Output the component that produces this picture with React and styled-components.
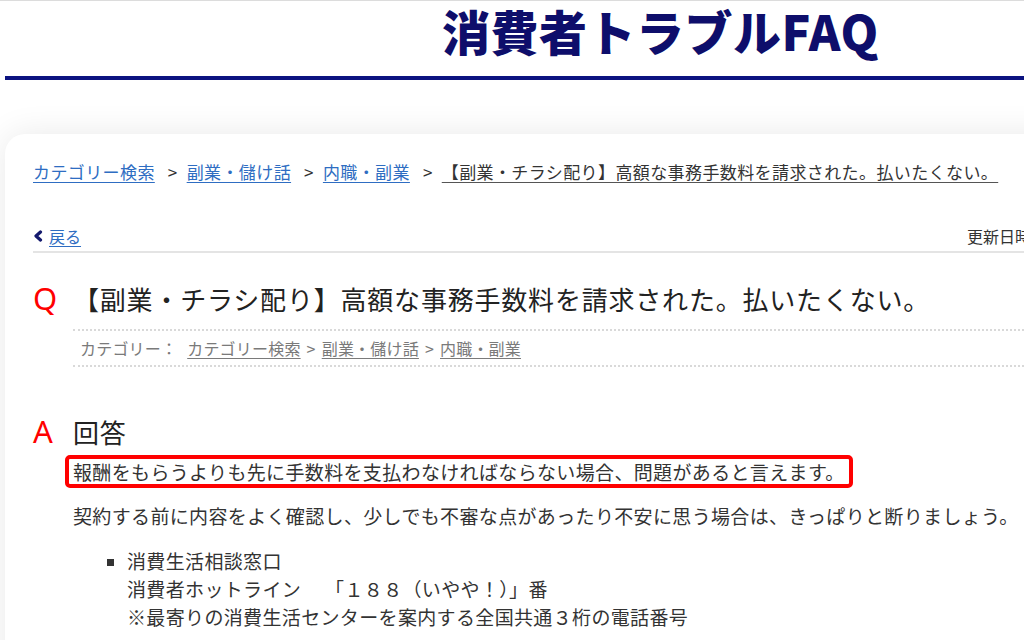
import React from "react";
import styled, { createGlobalStyle } from "styled-components";

const GlobalStyle = createGlobalStyle`
  html, body {
    margin: 0;
    padding: 0;
    background: #fff;
    overflow: hidden;
  }
  body {
    font-family: "Noto Sans CJK JP", "Noto Sans", sans-serif;
    color: #333;
  }
`;

const Page = styled.div`
  width: 1180px;
  min-height: 640px;
`;

const Header = styled.header`
  border-top: 1px solid #dcdcdc;
  padding: 0 0 0 442px;
  height: 75px;
`;

const SiteTitle = styled.h1`
  display: inline-block;
  margin: 0;
  font-size: 48px;
  line-height: 58px;
  font-weight: 900;
  color: #0e0e6b;
  letter-spacing: 0.5px;
`;

const NavyRule = styled.div`
  margin-left: 5px;
  height: 4px;
  background: #0c1380;
`;

const Card = styled.main`
  margin: 54px 0 0 5px;
  background: #fff;
  border-radius: 20px 0 0 0;
  box-shadow: 0 0 34px rgba(0, 0, 0, 0.09);
  padding: 25px 28px 40px;
  min-height: 520px;
`;

const Crumbs = styled.nav`
  font-size: 17px;
  line-height: 25px;
  letter-spacing: 0.4px;
  white-space: nowrap;
`;

const CrumbLink = styled.a`
  color: #2e6dc2;
  text-decoration: underline;
  text-underline-offset: 3px;
`;

const CrumbSep = styled.span`
  margin: 0 9px 0 13px;
  color: #333;
`;

const CrumbCurrent = styled.span`
  color: #333;
  text-decoration: underline;
  text-underline-offset: 3px;
  text-decoration-color: #555;
`;

const BackRow = styled.div`
  margin-top: 40px;
  display: flex;
  align-items: center;
  padding-bottom: 3px;
  border-bottom: 2px solid #e4e4e4;
  font-size: 16px;
  line-height: 24px;
`;

const BackLink = styled.a`
  display: flex;
  align-items: center;
  gap: 6px;
  color: #2e6dc2;
  text-decoration: underline;
  text-underline-offset: 3px;
`;

const Updated = styled.span`
  margin-left: auto;
  width: 185px;
  flex: none;
  color: #333;
  white-space: nowrap;
`;

const QaBlock = styled.section`
  display: grid;
  grid-template-columns: 40px 1fr;
  margin-top: ${(p) => p.$top}px;
`;

const Mark = styled.span`
  color: #f00;
  font-size: 31px;
  line-height: 37px;
  font-family: "Noto Sans", "Noto Sans CJK JP", sans-serif;
`;

const Heading = styled.h2`
  margin: 0;
  font-size: 26px;
  font-weight: 400;
  line-height: 37px;
  letter-spacing: 0.8px;
  color: #222;
`;

const Meta = styled.div`
  margin-top: 12px;
  border-top: 2px dotted #d9d9d9;
  border-bottom: 2px dotted #d9d9d9;
  padding: 7px 7px;
  font-size: 16px;
  line-height: 20px;
  letter-spacing: 0.2px;
  color: #7a7a7a;
  white-space: nowrap;
`;

const MetaLabel = styled.span`
  margin-right: 10px;
`;

const MetaLink = styled.a`
  color: #7a7a7a;
  text-decoration: underline;
  text-underline-offset: 3px;
`;

const MetaSep = styled.span`
  margin: 0 6px;
`;

const Answer = styled.div`
  grid-column: 2;
  font-size: 19px;
  letter-spacing: 0.35px;
  color: #333;
`;

const Highlight = styled.p`
  display: inline-block;
  margin: 5px 0 0 -8px;
  padding: 0 4px;
  border: 4px solid #f00;
  border-radius: 5px;
  line-height: 25px;
  white-space: nowrap;
`;

const Para = styled.p`
  margin: 14px 0 0;
  line-height: 28px;
  white-space: nowrap;
`;

const List = styled.ul`
  margin: 17px 0 0;
  padding-left: 54px;
  list-style: square;
  line-height: 28px;

  li::marker {
    font-size: 17px;
  }
`;

const Chevron = () => (
  <svg width="10" height="12" viewBox="0 0 10 12">
    <polyline
      points="7.5,2 3,6 7.5,10"
      fill="none"
      stroke="#141a6e"
      strokeWidth="3.2"
      strokeLinecap="round"
      strokeLinejoin="round"
    />
  </svg>
);

export default function App() {
  const title = "【副業・チラシ配り】高額な事務手数料を請求された。払いたくない。";
  return (
    <Page>
      <GlobalStyle />
      <Header>
        <SiteTitle>消費者トラブルFAQ</SiteTitle>
      </Header>
      <NavyRule />
      <Card>
        <Crumbs>
          <CrumbLink href="#">カテゴリー検索</CrumbLink>
          <CrumbSep>&gt;</CrumbSep>
          <CrumbLink href="#">副業・儲け話</CrumbLink>
          <CrumbSep>&gt;</CrumbSep>
          <CrumbLink href="#">内職・副業</CrumbLink>
          <CrumbSep>&gt;</CrumbSep>
          <CrumbCurrent>{title}</CrumbCurrent>
        </Crumbs>

        <BackRow>
          <BackLink href="#">
            <Chevron />
            戻る
          </BackLink>
          <Updated>更新日時：2023年</Updated>
        </BackRow>

        <QaBlock $top={27}>
          <Mark>Q</Mark>
          <div>
            <Heading>{title}</Heading>
            <Meta>
              <MetaLabel>カテゴリー：</MetaLabel>
              <MetaLink href="#">カテゴリー検索</MetaLink>
              <MetaSep>&gt;</MetaSep>
              <MetaLink href="#">副業・儲け話</MetaLink>
              <MetaSep>&gt;</MetaSep>
              <MetaLink href="#">内職・副業</MetaLink>
            </Meta>
          </div>
        </QaBlock>

        <QaBlock $top={46}>
          <Mark>A</Mark>
          <Heading>回答</Heading>
          <Answer>
            <Highlight>
              報酬をもらうよりも先に手数料を支払わなければならない場合、問題があると言えます。
            </Highlight>
            <Para>
              契約する前に内容をよく確認し、少しでも不審な点があったり不安に思う場合は、きっぱりと断りましょう。
            </Para>
            <List>
              <li>
                消費生活相談窓口
                <br />
                消費者ホットライン　 「１８８（いやや！）」番
                <br />
                ※最寄りの消費生活センターを案内する全国共通３桁の電話番号
              </li>
            </List>
          </Answer>
        </QaBlock>
      </Card>
    </Page>
  );
}
